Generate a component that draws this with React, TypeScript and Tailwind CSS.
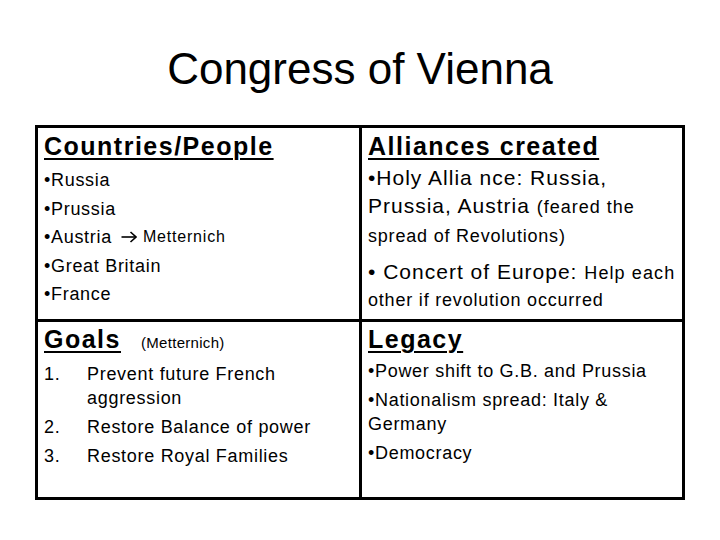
export default function App() {
  return (
    <div className="w-[720px] h-[540px] bg-white text-black font-['Liberation_Sans',Arial,sans-serif] overflow-hidden">
      <div className="h-[125px] pt-[47px] text-center text-[44px] leading-[44px]">Congress of Vienna</div>
      <div className="ml-[35px] w-[650px] h-[375px] border-[3px] border-black grid grid-cols-[324px_320px] grid-rows-[194px_175px]">
        {/* Top left */}
        <div className="border-r-[3px] border-b-[3px] border-black pl-[6px] pt-[3px]">
          <div className="text-[25px] leading-[30px] font-bold tracking-[1.5px] underline decoration-[2px] underline-offset-[3px]">Countries/People</div>
          <div className="mt-[5px] text-[18px] leading-[28.5px] tracking-[0.7px]">
            <div>•Russia</div>
            <div>•Prussia</div>
            <div className="flex items-center whitespace-nowrap">
              <span>•Austria</span>
              <svg width="16" height="12" viewBox="0 0 16 12" className="ml-[9px] mr-[6px]" fill="none" stroke="black" strokeWidth="1.6">
                <path d="M0.5 6 H15" />
                <path d="M9.5 1 L15 6 L9.5 11" />
              </svg>
              <span className="text-[16px] tracking-[0.8px]">Metternich</span>
            </div>
            <div>•Great Britain</div>
            <div>•France</div>
          </div>
        </div>
        {/* Top right */}
        <div className="border-b-[3px] border-black pl-[6px] pt-[3px]">
          <div className="text-[25px] leading-[30px] font-bold tracking-[1.5px] underline decoration-[2px] underline-offset-[3px]">Alliances created</div>
          <div className="mt-[3px] text-[21px] leading-[28px] tracking-[1px] whitespace-nowrap">
            •Holy Allia nce: Russia,
            <br />
            Prussia, Austria <span className="text-[18px] tracking-[1px]">(feared the</span>
            <br />
            <span className="text-[18px] tracking-[0.8px]">spread of Revolutions)</span>
          </div>
          <div className="mt-[9px] text-[21px] leading-[26px] tracking-[1px] whitespace-nowrap">
            • Concert of Europe: <span className="text-[18px] tracking-[1.1px]">Help each</span>
            <br />
            <span className="text-[18px] tracking-[0.8px]">other if revolution occurred</span>
          </div>
        </div>
        {/* Bottom left */}
        <div className="border-r-[3px] border-black pl-[6px] pt-[2px]">
          <div className="text-[25px] leading-[30px] whitespace-nowrap">
            <span className="font-bold tracking-[1.5px] underline decoration-[2px] underline-offset-[3px]">Goals</span>
            <span className="ml-[20px] text-[15px] tracking-[0.3px]">(Metternich)</span>
          </div>
          <div className="mt-[4px] text-[18px] leading-[24px] tracking-[0.7px] flex flex-col gap-[5px]">
            <div className="flex">
              <span className="w-[43px] shrink-0">1.</span>
              <span>Prevent future French<br />aggression</span>
            </div>
            <div className="flex">
              <span className="w-[43px] shrink-0">2.</span>
              <span>Restore Balance of power</span>
            </div>
            <div className="flex">
              <span className="w-[43px] shrink-0">3.</span>
              <span>Restore Royal Families</span>
            </div>
          </div>
        </div>
        {/* Bottom right */}
        <div className="pl-[6px] pt-[2px]">
          <div className="text-[25px] leading-[30px] font-bold tracking-[1.5px] underline decoration-[2px] underline-offset-[3px]">Legacy</div>
          <div className="mt-[5px] text-[18px] leading-[24px] tracking-[0.7px] flex flex-col gap-[5px] whitespace-nowrap">
            <div>•Power shift to G.B. and Prussia</div>
            <div>•Nationalism spread: Italy &amp;<br />Germany</div>
            <div>•Democracy</div>
          </div>
        </div>
      </div>
    </div>
  );
}
